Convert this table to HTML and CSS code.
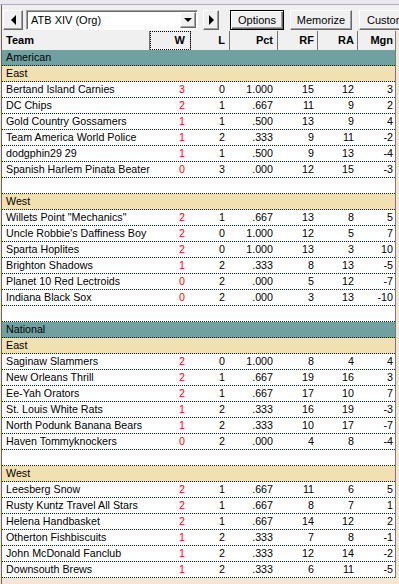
FILE: index.html
```html
<!DOCTYPE html>
<html>
<head>
<meta charset="utf-8">
<link rel="stylesheet" href="styles.css">
</head>
<body>
<div class="topstrip"></div>
<div class="frame">
  <div class="toolbar">
    <button class="btn arrow-btn left-btn"><span class="tri-left"></span></button>
    <div class="combo">
      <span class="combo-text">ATB XIV (Org)</span>
      <span class="combo-drop"><span class="tri-down"></span></span>
    </div>
    <button class="btn arrow-btn right-btn"><span class="tri-right"></span></button>
    <button class="btn default-btn options">Options</button>
    <button class="btn memorize">Memorize</button>
    <button class="btn custom">Custom</button>
  </div>
  <div class="grid">
    <div class="row hdr">
      <div class="c team">Team</div>
      <div class="c n w focus">W</div>
      <div class="c n l">L</div>
      <div class="c n pct">Pct</div>
      <div class="c n rf">RF</div>
      <div class="c n ra">RA</div>
      <div class="c n mgn">Mgn</div>
    </div>

    <div class="row league"><div class="c span">American</div></div>
    <div class="row division"><div class="c span">East</div></div>
    <div class="row"><div class="c team">Bertand Island Carnies</div><div class="c n w red">3</div><div class="c n l">0</div><div class="c n pct">1.000</div><div class="c n rf">15</div><div class="c n ra">12</div><div class="c n mgn">3</div></div>
    <div class="row"><div class="c team">DC Chips</div><div class="c n w red">2</div><div class="c n l">1</div><div class="c n pct">.667</div><div class="c n rf">11</div><div class="c n ra">9</div><div class="c n mgn">2</div></div>
    <div class="row"><div class="c team">Gold Country Gossamers</div><div class="c n w red">1</div><div class="c n l">1</div><div class="c n pct">.500</div><div class="c n rf">13</div><div class="c n ra">9</div><div class="c n mgn">4</div></div>
    <div class="row"><div class="c team">Team America World Police</div><div class="c n w red">1</div><div class="c n l">2</div><div class="c n pct">.333</div><div class="c n rf">9</div><div class="c n ra">11</div><div class="c n mgn">-2</div></div>
    <div class="row"><div class="c team">dodgphin29 29</div><div class="c n w red">1</div><div class="c n l">1</div><div class="c n pct">.500</div><div class="c n rf">9</div><div class="c n ra">13</div><div class="c n mgn">-4</div></div>
    <div class="row"><div class="c team">Spanish Harlem Pinata Beater</div><div class="c n w red">0</div><div class="c n l">3</div><div class="c n pct">.000</div><div class="c n rf">12</div><div class="c n ra">15</div><div class="c n mgn">-3</div></div>
    <div class="row blank"><div class="c span"></div></div>
    <div class="row division"><div class="c span">West</div></div>
    <div class="row"><div class="c team">Willets Point "Mechanics"</div><div class="c n w red">2</div><div class="c n l">1</div><div class="c n pct">.667</div><div class="c n rf">13</div><div class="c n ra">8</div><div class="c n mgn">5</div></div>
    <div class="row"><div class="c team">Uncle Robbie's Daffiness Boy</div><div class="c n w red">2</div><div class="c n l">0</div><div class="c n pct">1.000</div><div class="c n rf">12</div><div class="c n ra">5</div><div class="c n mgn">7</div></div>
    <div class="row"><div class="c team">Sparta Hoplites</div><div class="c n w red">2</div><div class="c n l">0</div><div class="c n pct">1.000</div><div class="c n rf">13</div><div class="c n ra">3</div><div class="c n mgn">10</div></div>
    <div class="row"><div class="c team">Brighton Shadows</div><div class="c n w red">1</div><div class="c n l">2</div><div class="c n pct">.333</div><div class="c n rf">8</div><div class="c n ra">13</div><div class="c n mgn">-5</div></div>
    <div class="row"><div class="c team">Planet 10 Red Lectroids</div><div class="c n w red">0</div><div class="c n l">2</div><div class="c n pct">.000</div><div class="c n rf">5</div><div class="c n ra">12</div><div class="c n mgn">-7</div></div>
    <div class="row"><div class="c team">Indiana Black Sox</div><div class="c n w red">0</div><div class="c n l">2</div><div class="c n pct">.000</div><div class="c n rf">3</div><div class="c n ra">13</div><div class="c n mgn">-10</div></div>
    <div class="row blank"><div class="c span"></div></div>

    <div class="row league"><div class="c span">National</div></div>
    <div class="row division"><div class="c span">East</div></div>
    <div class="row"><div class="c team">Saginaw Slammers</div><div class="c n w red">2</div><div class="c n l">0</div><div class="c n pct">1.000</div><div class="c n rf">8</div><div class="c n ra">4</div><div class="c n mgn">4</div></div>
    <div class="row"><div class="c team">New Orleans Thrill</div><div class="c n w red">2</div><div class="c n l">1</div><div class="c n pct">.667</div><div class="c n rf">19</div><div class="c n ra">16</div><div class="c n mgn">3</div></div>
    <div class="row"><div class="c team">Ee-Yah Orators</div><div class="c n w red">2</div><div class="c n l">1</div><div class="c n pct">.667</div><div class="c n rf">17</div><div class="c n ra">10</div><div class="c n mgn">7</div></div>
    <div class="row"><div class="c team">St. Louis White Rats</div><div class="c n w red">1</div><div class="c n l">2</div><div class="c n pct">.333</div><div class="c n rf">16</div><div class="c n ra">19</div><div class="c n mgn">-3</div></div>
    <div class="row"><div class="c team">North Podunk Banana Bears</div><div class="c n w red">1</div><div class="c n l">2</div><div class="c n pct">.333</div><div class="c n rf">10</div><div class="c n ra">17</div><div class="c n mgn">-7</div></div>
    <div class="row"><div class="c team">Haven Tommyknockers</div><div class="c n w red">0</div><div class="c n l">2</div><div class="c n pct">.000</div><div class="c n rf">4</div><div class="c n ra">8</div><div class="c n mgn">-4</div></div>
    <div class="row blank"><div class="c span"></div></div>
    <div class="row division"><div class="c span">West</div></div>
    <div class="row"><div class="c team">Leesberg Snow</div><div class="c n w red">2</div><div class="c n l">1</div><div class="c n pct">.667</div><div class="c n rf">11</div><div class="c n ra">6</div><div class="c n mgn">5</div></div>
    <div class="row"><div class="c team">Rusty Kuntz Travel All Stars</div><div class="c n w red">2</div><div class="c n l">1</div><div class="c n pct">.667</div><div class="c n rf">8</div><div class="c n ra">7</div><div class="c n mgn">1</div></div>
    <div class="row"><div class="c team">Helena Handbasket</div><div class="c n w red">2</div><div class="c n l">1</div><div class="c n pct">.667</div><div class="c n rf">14</div><div class="c n ra">12</div><div class="c n mgn">2</div></div>
    <div class="row"><div class="c team">Otherton Fishbiscuits</div><div class="c n w red">1</div><div class="c n l">2</div><div class="c n pct">.333</div><div class="c n rf">7</div><div class="c n ra">8</div><div class="c n mgn">-1</div></div>
    <div class="row"><div class="c team">John McDonald Fanclub</div><div class="c n w red">1</div><div class="c n l">2</div><div class="c n pct">.333</div><div class="c n rf">12</div><div class="c n ra">14</div><div class="c n mgn">-2</div></div>
    <div class="row"><div class="c team">Downsouth Brews</div><div class="c n w red">1</div><div class="c n l">2</div><div class="c n pct">.333</div><div class="c n rf">6</div><div class="c n ra">11</div><div class="c n mgn">-5</div></div>
  </div>
</div>
</body>
</html>
```

FILE: styles.css
```css
html, body {
  margin: 0;
  padding: 0;
}
body {
  width: 399px;
  height: 584px;
  overflow: hidden;
  background: #f3e6d6;
  font-family: "Liberation Sans", Arial, sans-serif;
  font-size: 10.7px;
  color: #000;
}
.topstrip {
  height: 4px;
  background: #ebe7ef;
  border-bottom: 1px solid #b4aebb;
}
.frame {
  margin-left: 1px;
  border-left: 1px solid #646464;
  height: 579px;
  background: #f3e6d6;
}
.toolbar {
  display: flex;
  align-items: flex-start;
  height: 26px;
  padding-top: 5px;
  box-sizing: border-box;
  background: #f0f0f0;
  overflow: hidden;
  white-space: nowrap;
}
.btn {
  font-family: "Liberation Sans", Arial, sans-serif;
  font-size: 11px;
  color: #000;
  height: 20px;
  padding: 0;
  margin: 0;
  background: #f0f0f0;
  border: 1px solid;
  border-color: #fff #696969 #696969 #fff;
  box-shadow: inset -1px -1px 0 #a0a0a0;
  box-sizing: border-box;
  display: flex;
  align-items: center;
  justify-content: center;
  flex: none;
}
.default-btn {
  border: 1px solid #000;
  box-shadow: inset 1px 1px 0 #fff, inset -1px -1px 0 #696969, inset -2px -2px 0 #a0a0a0;
}
.left-btn {
  margin-left: 1px;
  width: 20px;
}
.right-btn {
  margin-left: 5px;
  width: 16px;
}
.options {
  margin-left: 11px;
  width: 54px;
}
.memorize {
  margin-left: 6px;
  width: 62px;
}
.custom {
  margin-left: 7px;
  width: 50px;
  justify-content: flex-start;
  padding-left: 7px;
}
.tri-left {
  width: 0;
  height: 0;
  border-top: 5px solid transparent;
  border-bottom: 5px solid transparent;
  border-right: 5px solid #000;
}
.tri-right {
  width: 0;
  height: 0;
  border-top: 5px solid transparent;
  border-bottom: 5px solid transparent;
  border-left: 5px solid #000;
}
.tri-down {
  width: 0;
  height: 0;
  border-left: 4px solid transparent;
  border-right: 4px solid transparent;
  border-top: 4px solid #000;
}
.combo {
  margin-left: 3px;
  width: 172px;
  height: 20px;
  box-sizing: border-box;
  background: #fff;
  border: 1px solid;
  border-color: #a0a0a0 #fff #fff #a0a0a0;
  box-shadow: inset 1px 1px 0 #696969;
  display: flex;
  align-items: center;
  flex: none;
}
.combo-text {
  flex: 1;
  padding-left: 4px;
  font-size: 11px;
}
.combo-drop {
  width: 16px;
  height: 16px;
  margin-right: 1px;
  box-sizing: border-box;
  background: #f0f0f0;
  border: 1px solid;
  border-color: #fff #696969 #696969 #fff;
  box-shadow: inset -1px -1px 0 #a0a0a0;
  display: flex;
  align-items: center;
  justify-content: center;
}
.grid {
  width: 394px;
  box-sizing: border-box;
  border-right: 1px solid #7a7a7a;
  background: #fff;
}
.row {
  display: grid;
  grid-template-columns: 148px 41px 39px 48px 40px 40px 37px;
  height: 16px;
  box-sizing: border-box;
  border-bottom: 1px dotted #0000ff;
  line-height: 15px;
}
.c {
  white-space: nowrap;
  overflow: hidden;
}
.team, .span {
  padding-left: 4px;
}
.span {
  grid-column: 1 / -1;
}
.n {
  text-align: right;
}
.w { padding-right: 6px; }
.l { padding-right: 5px; }
.pct { padding-right: 5px; }
.rf { padding-right: 4px; }
.ra { padding-right: 4px; }
.mgn { padding-right: 2px; }
.red {
  color: #ff0000;
}
.hdr {
  height: 19px;
  border-bottom: none;
  background: #f0f0f0;
  font-weight: bold;
  font-size: 11px;
  line-height: 19px;
}
.hdr .c {
  border-right: 1px solid #707070;
}
.hdr .mgn {
  border-right: none;
}
.hdr .w { padding-right: 5px; }
.hdr .l { padding-right: 4px; }
.hdr .pct { padding-right: 4px; }
.hdr .rf { padding-right: 3px; }
.hdr .ra { padding-right: 3px; }
.hdr .focus {
  outline: 1px dotted #000;
  outline-offset: -1px;
}
.league {
  background: #70a0a0;
}
.division {
  background: #f2dfb2;
}
.blank {
  background: #fff;
}
```
